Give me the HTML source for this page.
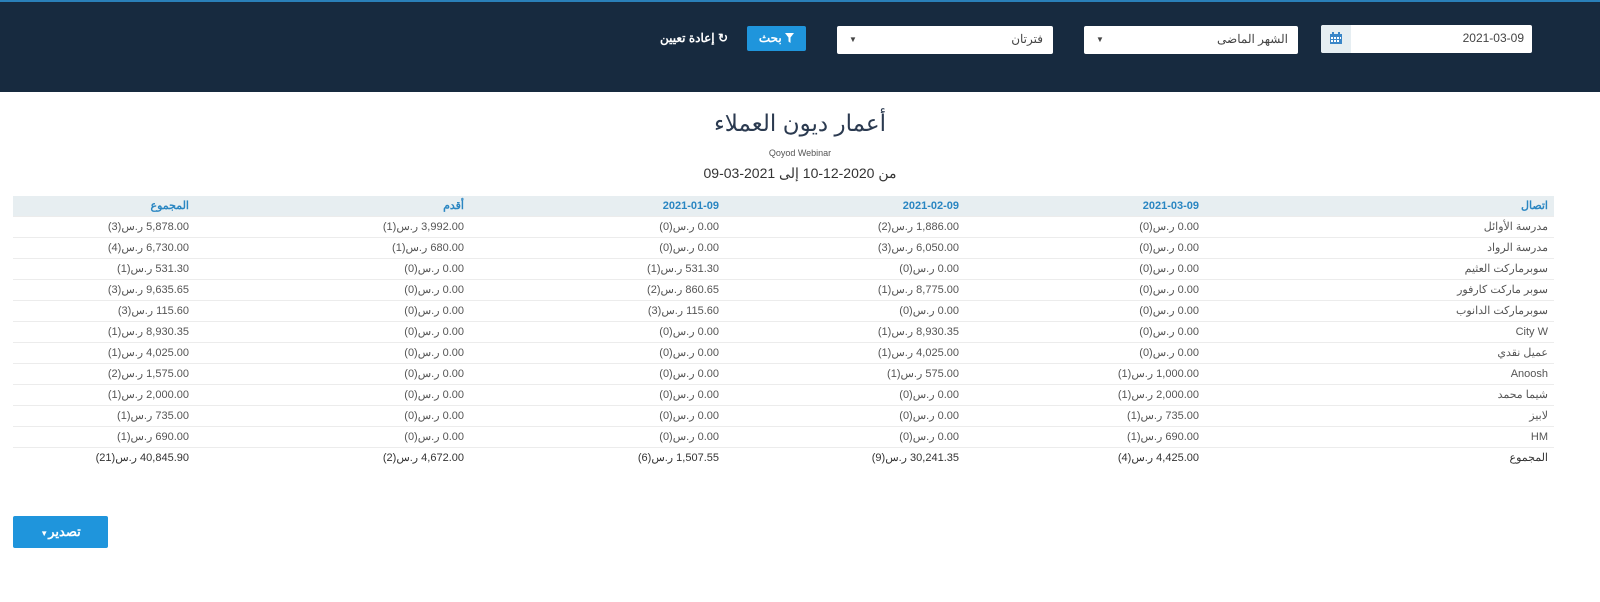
<!DOCTYPE html>
<html><head><meta charset="utf-8"><style>
*{box-sizing:border-box;margin:0;padding:0}
body{width:1600px;height:602px;background:#fff;font-family:"Liberation Sans","Noto Sans CJK SC",sans-serif;position:relative;overflow:hidden}
.hdr{position:absolute;left:0;top:0;width:1600px;height:92px;background:#172a3f;border-top:2px solid #2a80b9}
.box{position:absolute;background:#fff;border-radius:2px;font-size:12px;color:#444;direction:rtl;padding-right:10px;line-height:27px}
.abs{position:absolute}
table{position:absolute;left:13px;top:196px;width:1541px;border-collapse:collapse;direction:rtl;font-size:11px;color:#555}
td,th{height:21px;padding:0 6px;text-align:right;border-bottom:1px solid #ececec;white-space:nowrap}
th{height:20px;background:#e7eef1;color:#2a86c2;font-weight:bold}
tr.tot td{border-top:1px solid #333;color:#333;border-bottom:none}
.v{direction:ltr;unicode-bidi:isolate;display:inline-block}
</style></head><body>
<div class="hdr"></div>
<div class="box" style="left:1321px;top:25px;width:211px;height:28px;padding-right:8px;">2021-03-09
<div style="position:absolute;left:0;top:0;width:30px;height:28px;background:#e6eef2;border-radius:3px 0 0 3px"><svg width="12" height="12" style="position:absolute;left:9px;top:7px" viewBox="0 0 12 12"><rect x="0" y="2" width="12" height="10" fill="#3a86c8"/><rect x="2" y="0" width="2" height="3" fill="#3a86c8"/><rect x="8" y="0" width="2" height="3" fill="#3a86c8"/><g fill="#fff"><rect x="1" y="5" width="2" height="2"/><rect x="4" y="5" width="2" height="2"/><rect x="7" y="5" width="2" height="2"/><rect x="10" y="5" width="1" height="2"/><rect x="1" y="8" width="2" height="2"/><rect x="4" y="8" width="2" height="2"/><rect x="7" y="8" width="2" height="2"/></g></svg></div></div>
<div class="box" style="left:1084px;top:26px;width:214px;height:28px;">الشهر الماضى<span style="position:absolute;left:12px;top:0;font-size:8px">▼</span></div>
<div class="box" style="left:837px;top:26px;width:216px;height:28px;">فترتان<span style="position:absolute;left:12px;top:0;font-size:8px">▼</span></div>
<div class="abs" style="left:747px;top:26px;width:59px;height:25px;background:#1f95dc;border-radius:2px;color:#fff;font-size:12px;font-weight:bold;line-height:25px;text-align:center;direction:rtl">
<svg width="9" height="10" viewBox="0 0 9 10" style="vertical-align:-1px"><path d="M0 0H9L5.5 4.5V10L3.5 8.5V4.5Z" fill="#fff"/></svg> بحث</div>
<div class="abs" style="left:660px;top:31px;color:#fff;font-size:12px;font-weight:bold;direction:rtl">↻ إعادة تعيين</div>

<div class="abs" style="left:0;width:1600px;top:110px;text-align:center;font-size:23px;color:#2b3a50;direction:rtl">أعمار ديون العملاء</div>
<div class="abs" style="left:0;width:1600px;top:148px;text-align:center;font-size:9px;color:#555">Qoyod Webinar</div>
<div class="abs" style="left:0;width:1600px;top:165px;text-align:center;font-size:14px;color:#333;direction:rtl">من 2020-12-10 إلى 2021-03-09</div>

<table>
<colgroup><col style="width:349px"><col style="width:240px"><col style="width:240px"><col style="width:255px"><col style="width:275px"><col></colgroup>
<tr><th>اتصال</th><th>2021-03-09</th><th>2021-02-09</th><th>2021-01-09</th><th>أقدم</th><th>المجموع</th></tr>
<tr><td>مدرسة الأوائل</td><td><span class="v">(0)<bdi>ر.س</bdi> 0.00</span></td><td><span class="v">(2)<bdi>ر.س</bdi> 1,886.00</span></td><td><span class="v">(0)<bdi>ر.س</bdi> 0.00</span></td><td><span class="v">(1)<bdi>ر.س</bdi> 3,992.00</span></td><td><span class="v">(3)<bdi>ر.س</bdi> 5,878.00</span></td></tr>
<tr><td>مدرسة الرواد</td><td><span class="v">(0)<bdi>ر.س</bdi> 0.00</span></td><td><span class="v">(3)<bdi>ر.س</bdi> 6,050.00</span></td><td><span class="v">(0)<bdi>ر.س</bdi> 0.00</span></td><td><span class="v">(1)<bdi>ر.س</bdi> 680.00</span></td><td><span class="v">(4)<bdi>ر.س</bdi> 6,730.00</span></td></tr>
<tr><td>سوبرماركت العثيم</td><td><span class="v">(0)<bdi>ر.س</bdi> 0.00</span></td><td><span class="v">(0)<bdi>ر.س</bdi> 0.00</span></td><td><span class="v">(1)<bdi>ر.س</bdi> 531.30</span></td><td><span class="v">(0)<bdi>ر.س</bdi> 0.00</span></td><td><span class="v">(1)<bdi>ر.س</bdi> 531.30</span></td></tr>
<tr><td>سوبر ماركت كارفور</td><td><span class="v">(0)<bdi>ر.س</bdi> 0.00</span></td><td><span class="v">(1)<bdi>ر.س</bdi> 8,775.00</span></td><td><span class="v">(2)<bdi>ر.س</bdi> 860.65</span></td><td><span class="v">(0)<bdi>ر.س</bdi> 0.00</span></td><td><span class="v">(3)<bdi>ر.س</bdi> 9,635.65</span></td></tr>
<tr><td>سوبرماركت الدانوب</td><td><span class="v">(0)<bdi>ر.س</bdi> 0.00</span></td><td><span class="v">(0)<bdi>ر.س</bdi> 0.00</span></td><td><span class="v">(3)<bdi>ر.س</bdi> 115.60</span></td><td><span class="v">(0)<bdi>ر.س</bdi> 0.00</span></td><td><span class="v">(3)<bdi>ر.س</bdi> 115.60</span></td></tr>
<tr><td>City W</td><td><span class="v">(0)<bdi>ر.س</bdi> 0.00</span></td><td><span class="v">(1)<bdi>ر.س</bdi> 8,930.35</span></td><td><span class="v">(0)<bdi>ر.س</bdi> 0.00</span></td><td><span class="v">(0)<bdi>ر.س</bdi> 0.00</span></td><td><span class="v">(1)<bdi>ر.س</bdi> 8,930.35</span></td></tr>
<tr><td>عميل نقدي</td><td><span class="v">(0)<bdi>ر.س</bdi> 0.00</span></td><td><span class="v">(1)<bdi>ر.س</bdi> 4,025.00</span></td><td><span class="v">(0)<bdi>ر.س</bdi> 0.00</span></td><td><span class="v">(0)<bdi>ر.س</bdi> 0.00</span></td><td><span class="v">(1)<bdi>ر.س</bdi> 4,025.00</span></td></tr>
<tr><td>Anoosh</td><td><span class="v">(1)<bdi>ر.س</bdi> 1,000.00</span></td><td><span class="v">(1)<bdi>ر.س</bdi> 575.00</span></td><td><span class="v">(0)<bdi>ر.س</bdi> 0.00</span></td><td><span class="v">(0)<bdi>ر.س</bdi> 0.00</span></td><td><span class="v">(2)<bdi>ر.س</bdi> 1,575.00</span></td></tr>
<tr><td>شيما محمد</td><td><span class="v">(1)<bdi>ر.س</bdi> 2,000.00</span></td><td><span class="v">(0)<bdi>ر.س</bdi> 0.00</span></td><td><span class="v">(0)<bdi>ر.س</bdi> 0.00</span></td><td><span class="v">(0)<bdi>ر.س</bdi> 0.00</span></td><td><span class="v">(1)<bdi>ر.س</bdi> 2,000.00</span></td></tr>
<tr><td>لابيز</td><td><span class="v">(1)<bdi>ر.س</bdi> 735.00</span></td><td><span class="v">(0)<bdi>ر.س</bdi> 0.00</span></td><td><span class="v">(0)<bdi>ر.س</bdi> 0.00</span></td><td><span class="v">(0)<bdi>ر.س</bdi> 0.00</span></td><td><span class="v">(1)<bdi>ر.س</bdi> 735.00</span></td></tr>
<tr><td>HM</td><td><span class="v">(1)<bdi>ر.س</bdi> 690.00</span></td><td><span class="v">(0)<bdi>ر.س</bdi> 0.00</span></td><td><span class="v">(0)<bdi>ر.س</bdi> 0.00</span></td><td><span class="v">(0)<bdi>ر.س</bdi> 0.00</span></td><td><span class="v">(1)<bdi>ر.س</bdi> 690.00</span></td></tr>
<tr class="tot"><td>المجموع</td><td><span class="v">(4)<bdi>ر.س</bdi> 4,425.00</span></td><td><span class="v">(9)<bdi>ر.س</bdi> 30,241.35</span></td><td><span class="v">(6)<bdi>ر.س</bdi> 1,507.55</span></td><td><span class="v">(2)<bdi>ر.س</bdi> 4,672.00</span></td><td><span class="v">(21)<bdi>ر.س</bdi> 40,845.90</span></td></tr>
</table>

<div class="abs" style="left:13px;top:516px;width:95px;height:32px;background:#1f95dc;border-radius:2px;color:#fff;font-size:13px;font-weight:bold;line-height:32px;text-align:center;direction:rtl">تصدير<span style="font-size:8px">▼</span></div>
</body></html>
